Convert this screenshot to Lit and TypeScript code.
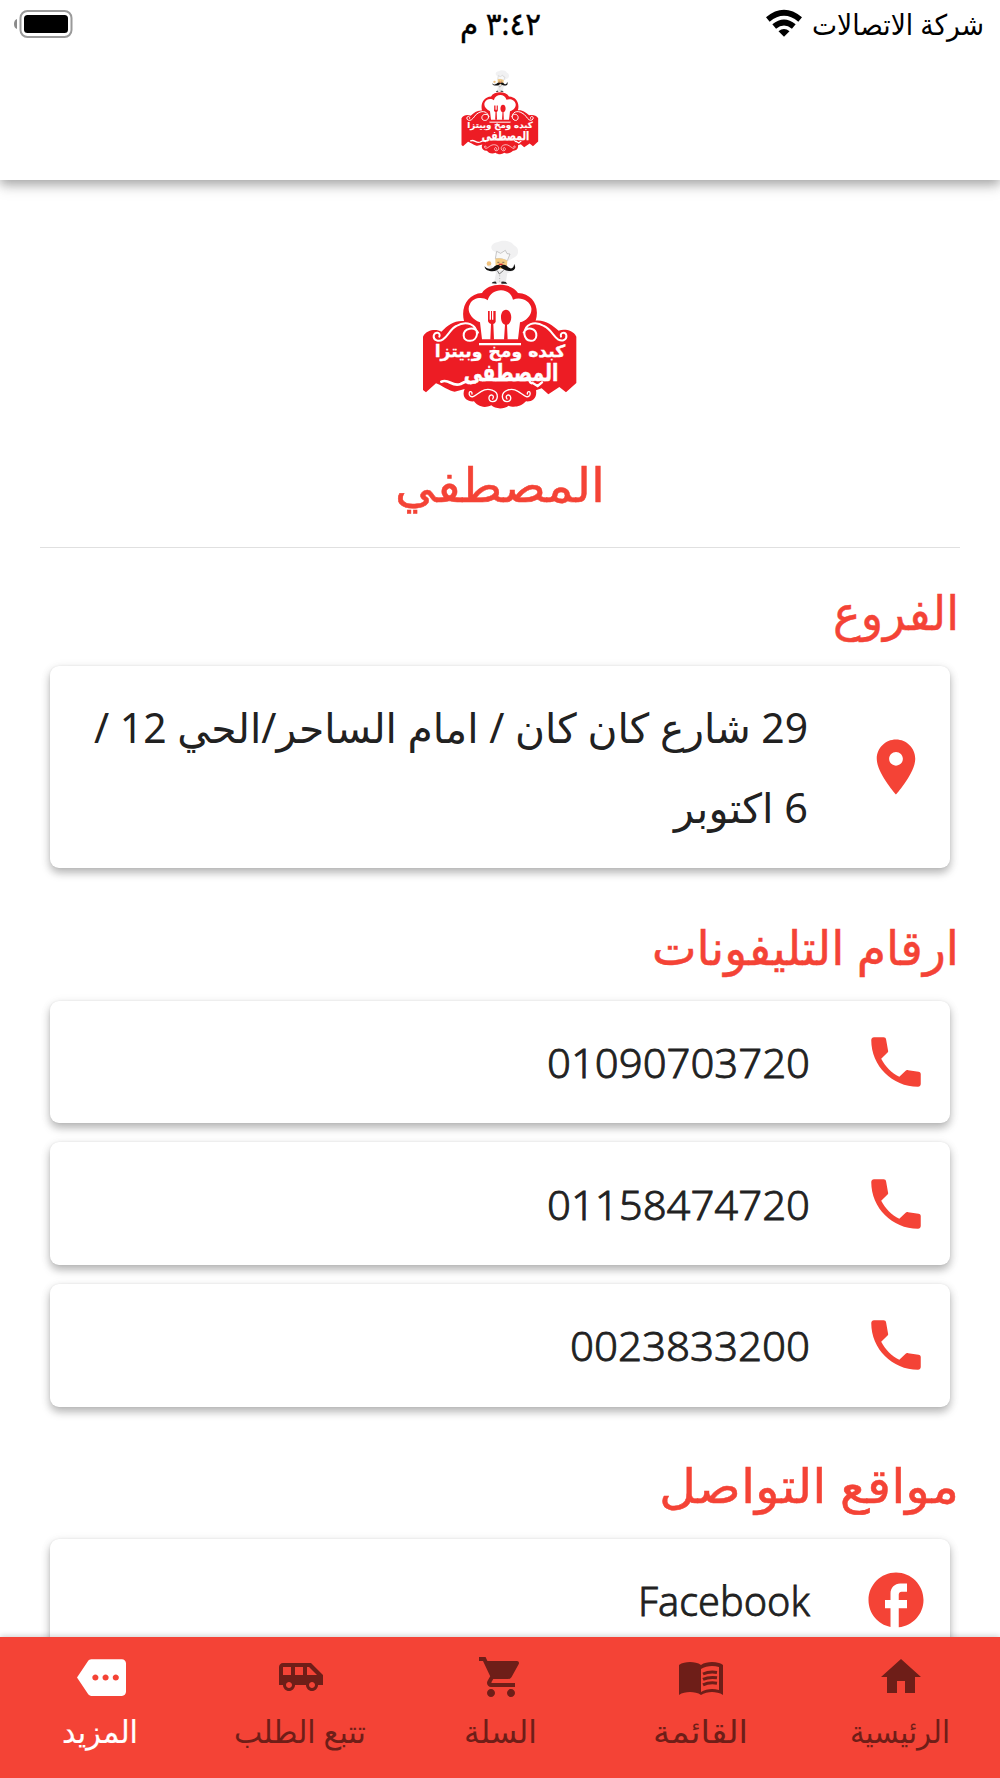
import { LitElement, html, css, svg } from "lit";
import { customElement, property } from "lit/decorators.js";

const ICONS: Record<string, string> = {
  pin: "M12 2C8.13 2 5 5.13 5 9c0 5.25 7 13 7 13s7-7.75 7-13c0-3.87-3.13-7-7-7zm0 9.5c-1.38 0-2.5-1.12-2.5-2.5s1.12-2.5 2.5-2.5 2.5 1.12 2.5 2.5-1.12 2.5-2.5 2.5z",
  call: "M20.2 15.5l-3.77-.5c-.35-.11-.74-.03-1.02.24l-2.2 2.13c-2.83-1.44-5.15-3.75-6.59-6.59l2.4-2.3c.1-.1.16-.3.12-.5L8.4 3.8c-.06-.5-.45-.8-.9-.8H4c-.55 0-1 .45-1 1 0 9.39 7.61 17 17 17 .55 0 1-.45 1-1v-3.600c0-.5-.3-.84-.8-.9z",
  facebook: "M22 12c0-5.52-4.48-10-10-10S2 6.48 2 12c0 4.84 3.44 8.87 8 9.8V15H8v-3h2V9.5C10 7.57 11.57 6 13.5 6H16v3h-2c-.55 0-1 .45-1 1v2h3v3h-3v6.95c5.05-.5 9-4.76 9-9.95z",
  home: "M10 20v-6h4v6h5v-8h3L12 3 2 12h3v8z",
  menu: "M21 5c-1.11-.35-2.33-.5-3.5-.5-1.95 0-4.05.4-5.5 1.5-1.45-1.1-3.55-1.5-5.5-1.5S2.45 4.9 1 6v15c1.45-1.1 3.55-1.5 5.5-1.5S10.55 19.9 12 21c1.35-.85 3.8-1.5 5.5-1.5 1.65 0 4.05.4 5.5 1.5V6c-.6-.45-1.25-.75-2-1zm0 13.5c-1.1-.35-2.3-.5-3.5-.5-1.7 0-4.15.65-5.5 1.5V8c1.35-.85 3.8-1.5 5.5-1.5 1.2 0 2.4.15 3.5.5z",
  cart: "M7 18c-1.1 0-1.99.9-1.99 2S5.9 22 7 22s2-.9 2-2-.9-2-2-2zM1 2v2h2l3.6 7.59-1.35 2.45c-.16.28-.25.61-.25.96 0 1.1.9 2 2 2h12v-2H7.42c-.14 0-.25-.11-.25-.25l.03-.12.9-1.63h7.45c.75 0 1.41-.41 1.75-1.03l3.58-6.49c.08-.14.12-.31.12-.48 0-.55-.45-1-1-1H5.21l-.94-2H1zm16 16c-1.1 0-1.99.9-1.99 2s.89 2 1.99 2 2-.9 2-2-.9-2-2-2z",
  van: "M17 5H3c-1.1 0-2 .89-2 2v9h2c0 1.65 1.34 3 3 3s3-1.35 3-3h5.5c0 1.65 1.34 3 3 3s3-1.35 3-3H23v-5l-6-6zM3 11V7h4v4H3zm3 6.5c-.83 0-1.5-.67-1.5-1.5s.67-1.5 1.5-1.5 1.5.67 1.5 1.5-.67 1.5-1.5 1.5zm7-6.5H9V7h4v4zm4.5 6.5c-.83 0-1.5-.67-1.5-1.5s.67-1.5 1.5-1.5 1.5.67 1.5 1.5-.67 1.5-1.5 1.5zM15 11V7h1l4 4h-5z",
  more: "M22 3H7c-.69 0-1.23.35-1.59.88L0 12l5.41 8.11c.36.53.97.89 1.66.89H22c1.1 0 2-.9 2-2V5c0-1.1-.9-2-2-2zM9 13.5c-.83 0-1.5-.67-1.5-1.5s.67-1.5 1.5-1.5 1.5.67 1.5 1.5-.67 1.5-1.5 1.5zm5 0c-.83 0-1.5-.67-1.5-1.5s.67-1.5 1.5-1.5 1.5.67 1.5 1.5-.67 1.5-1.5 1.5zm5 0c-.83 0-1.5-.67-1.5-1.5s.67-1.5 1.5-1.5 1.5.67 1.5 1.5-.67 1.5-1.5 1.5z",
};

@customElement("app-icon")
class AppIcon extends LitElement {
  @property() name = "";
  @property({ type: Number }) size = 48;
  static styles = css`:host, svg { display: block; }`;
  render() {
    return html`<svg width=${this.size} height=${this.size} viewBox="0 0 24 24" fill="currentColor">
      <path fill-rule="evenodd" d=${ICONS[this.name]}></path>
      ${this.name === "menu"
        ? svg`<path fill="none" stroke="currentColor" stroke-width="1.5" d="M13 10.500q3-1.400 7-.8M13 13.200q3-1.400 7-.8M13 15.900q3-1.400 7-.8"></path>`
        : ""}
    </svg>`;
  }
}

/* One line of text set to an exact measure; the baseline sits at \`base\` inside the box. */
@customElement("fit-text")
class FitText extends LitElement {
  @property() text = "";
  @property({ type: Number }) w = 100;
  @property({ type: Number }) h = 60;
  @property({ type: Number }) base = 40;
  @property({ type: Number }) size = 40;
  @property({ type: Number }) bold = 0;
  static styles = css`
    :host, svg { display: block; overflow: visible; }
    text { font-family: "Noto Sans", "DejaVu Sans", sans-serif; font-weight: inherit; }
  `;
  render() {
    return html`<svg width=${this.w} height=${this.h} fill="currentColor" stroke="currentColor" stroke-width=${this.bold}>
      <text x=${this.w / 2} y=${this.base} font-size=${this.size} text-anchor="middle"
        direction="rtl" textLength=${this.w} lengthAdjust="spacingAndGlyphs">${this.text}</text>
    </svg>`;
  }
}

@customElement("brand-logo")
class BrandLogo extends LitElement {
  @property({ type: Number }) size = 200;
  static styles = css`
    :host, svg { display: block; }
    text { font-family: "DejaVu Sans", sans-serif; font-weight: 700; }
  `;
  render() {
    return html`<svg width=${this.size} height=${this.size} viewBox="0 0 600 600">
      <path fill="#f1f1f2" d="M287 96C268 92 270 70 292 67C306 58 333 62 342 76C360 84 357 108 341 113L326 122L287 117Z"></path>
      <path fill="#f8f8f8" stroke="#999" stroke-width="1.5" d="M290 94L302 100L316 91L321 101L330 102L322 122Q303 113 286 116Z"></path>
      <path fill="#f3cb83" d="M286 116Q305 111 322 122L320 147H287Z"></path>
      <circle cx="267" cy="131" r="7" fill="#f0c27e"></circle>
      <path fill="#ededee" d="M262 138L288 158L282 190H317L322 160L338 154L318 149H285L274 136Z"></path>
      <path fill="#c82128" d="M296 131h12v4h-12z"></path>
      <path fill="none" stroke="#444" stroke-width="2" d="M292 127h6M307 127h6M292 152L298 162L311 151"></path>
      <path fill="none" stroke="#999" stroke-width="2" stroke-dasharray="3 5" d="M299 166v20"></path>
      <path fill="#111" d="M254 139C260 149 276 148 282 140C291 132 299 135 302 139C308 132 318 133 325 142C334 149 343 144 342 131C351 146 342 155 327 153C315 152 306 146 301 142C293 153 282 155 269 153C258 151 254 145 254 139Z"></path>
      <path fill="#222" d="M275 190Q277 184 288 185L290 191ZM304 185Q318 183 322 191H304Z"></path>
      <path fill="#ed1c24" d="M192 303C181 260 205 221 246 219C265 187 333 185 354 219C398 221 420 260 407 302C440 300 456 317 476 332C490 327 518 328 529 350V489L498 517L478 501L445 523L425 505L408 511C412 533 397 546 378 544C362 562 337 563 326 557C309 570 284 566 274 556C249 568 230 555 222 544C198 546 184 528 194 507L164 515C150 515 121 494 108 490L78 517L69 510V350C82 326 112 328 124 335C145 314 162 301 192 303Z"></path>
      <path fill="#fff" d="M246 358L240 307C211 296 199 269 210 252C219 232 249 230 263 241C273 203 329 199 339 239C363 229 390 243 394 264C397 284 378 303 360 307L354 358Z"></path>
      <path fill="#fff" d="M237 369h126v7H237z"></path>
      <path fill="#ed1c24" d="M237 360h126v8H237z"></path>
      <path fill="#ed1c24" d="M264 273h5v26h4v-26h3v26h4v-26h7v32q-2 6-7 7l2 47h-11l2-47q-7-2-9-8zM318 269C338 269 339 311 321 314L323 359H312L315 314C298 309 299 269 318 269Z"></path>
      <g fill="none" stroke="#fff" stroke-width="6" stroke-linecap="round">
        <path d="M234 338C225 318 190 323 191 347C192 369 229 368 231 342C230 313 199 300 169 318C151 326 146 347 128 359C116 367 100 360 101 348C103 333 124 337 118 350"></path>
        <path d="M371 338C380 318 410 323 409 347C408 369 377 368 373 342C373 313 403 300 432 318C453 327 459 348 475 359C488 366 501 358 499 346C496 334 479 337 483 350"></path>
        <g stroke-width="4">
          <path d="M216 522C217 510 203 514 209 526C216 538 230 522 244 514C265 501 293 512 292 530C290 551 264 548 267 532C269 520 286 525 278 537"></path>
          <path d="M382 522C381 510 395 514 389 526C382 538 368 522 354 514C333 501 307 512 307 530C309 551 335 548 332 532C330 520 313 525 321 537"></path>
        </g>
        <path stroke-width="8" d="M124 485C148 474 155 503 182 492C196 484 202 482 212 489"></path>
        <path stroke-width="7" d="M240 480H388Q390 492 398 489L413 498L426 487"></path>
      </g>
      <text x="300" y="410" font-size="50" fill="#fff" stroke="#fff" stroke-width="1" text-anchor="middle" direction="rtl" textLength="392" lengthAdjust="spacingAndGlyphs">كبده ومخ وبيتزا</text>
      <text x="333" y="482" font-size="72" fill="#fff" stroke="#fff" stroke-width="1.5" text-anchor="middle" direction="rtl" textLength="284" lengthAdjust="spacingAndGlyphs">المصطفى</text>
    </svg>`;
  }
}

@customElement("app-root")
class AppRoot extends LitElement {
  static styles = css`
    :host { display: flex; flex-direction: column; height: 1778px; background: #fff; direction: rtl; overflow: hidden; color: #212121; }
    .header { height: 180px; flex: none; background: #fff; box-shadow: 0 4px 10px rgba(0,0,0,.28), 0 8px 14px rgba(0,0,0,.1); z-index: 1; }
    .status { height: 60px; display: grid; grid-template-columns: 1fr auto 1fr; color: #000; }
    .carrier { display: flex; gap: 10px; padding-right: 16px; }
    .wifi { margin-top: 9px; }
    .battery { justify-self: end; margin: 10px 0 0 14px; }
    .header-logo { display: flex; justify-content: center; }
    .content { flex: 1; min-height: 0; overflow: hidden; padding: 40px 40px 0; }
    .brand { display: flex; flex-direction: column; align-items: center; color: #f44336; height: 327px; border-bottom: 1px solid #e0e0e0; }
    .brand fit-text { margin-top: 30px; }
    .heading { color: #f44336; padding: 30px 1px 0 0; height: 88px; }
    .cards { display: flex; flex-direction: column; gap: 19.3px; padding: 0 10px; }
    .card { display: flex; align-items: center; height: 122.5px; border-radius: 9px; background: #fff; box-shadow: 0 0 2px rgba(0,0,0,.08), 0 5px 8px rgba(0,0,0,.25), 0 2px 12px rgba(0,0,0,.07); padding-right: 21px; }
    .card.tall { height: 202px; }
    .card app-icon { color: #f44336; }
    .lines { padding-right: 55px; }
    .nums { padding-right: 53px; font-weight: 300; }
    .sec { margin-bottom: 14.5px; }
    .nav { height: 141px; flex: none; background: #f44336; display: grid; grid-template-columns: repeat(5, 1fr); color: #6e1e18; z-index: 1; box-shadow: 0 -1px 6px rgba(0,0,0,.2); }
    .tab { display: flex; flex-direction: column; align-items: center; padding: 16px 0 0 2px; }
    .tab fit-text { margin-right: 2px; }
    .tab.on { color: #fff; }
  `;

  private number(n: string, w: number) {
    return html`<div class="card"><app-icon name="call" .size=${66}></app-icon>
      <fit-text class="nums" .text=${n} .w=${w} .h=${62} .base=${47} .size=${40.5} .bold=${0.8}></fit-text></div>`;
  }
  private heading(t: string, w: number) {
    return html`<div class="heading"><fit-text .text=${t} .w=${w} .h=${56} .base=${52} .size=${48} .bold=${0.5}></fit-text></div>`;
  }
  private tab(name: string, label: string, w: number, on = false) {
    return html`<div class="tab ${on ? "on" : ""}"><app-icon .name=${name} .size=${on ? 49 : 48}></app-icon>
      <fit-text .text=${label} .w=${w} .h=${60} .base=${on ? 40.5 : 41.5} .size=${31.5} .bold=${on ? 0.2 : 0}></fit-text></div>`;
  }

  render() {
    return html`
      <div class="header">
        <div class="status">
          <div class="carrier">
            <fit-text .text=${"شركة الاتصالات"} .w=${172} .h=${50} .base=${34.5} .size=${28.5}></fit-text>
            <svg class="wifi" width="36" height="28" viewBox="0 0 36 28">
              <g fill="none" stroke="#000" stroke-width="5.8">
                <path d="M1.800 10.500Q18-3 34.200 10.500"></path><path d="M8.200 17.500Q18 9.300 27.800 17.500"></path>
              </g>
              <path d="M12.500 22.200Q18 18 23.500 22.200L18 27.800Z"></path>
            </svg>
          </div>
          <fit-text .text=${"٣:٤٢ م"} .w=${81} .h=${50} .base=${34.5} .size=${31.5} .bold=${0.4}></fit-text>
          <svg class="battery" width="59" height="28" viewBox="0 0 59 28">
            <path fill="#8a8a8a" d="M3 9Q0 10 0 14T3 19Z"></path>
            <rect x="6.5" y="1" width="51" height="26" rx="7" fill="none" stroke="#9a9a9a" stroke-width="2"></rect>
            <rect x="10" y="5" width="44" height="18" rx="3.5"></rect>
          </svg>
        </div>
        <div class="header-logo"><brand-logo .size=${100}></brand-logo></div>
      </div>
      <div class="content">
        <div class="brand"><brand-logo .size=${200}></brand-logo>
          <fit-text .text=${"المصطفي"} .w=${210} .h=${80} .base=${51.5} .size=${48} .bold=${0.5}></fit-text></div>
        <div class="sec">
          ${this.heading("الفروع", 126)}
          <div class="cards"><div class="card tall"><app-icon name="pin" .size=${66}></app-icon>
            <div class="lines">
              <fit-text .text=${"29 شارع كان كان / امام الساحر/الحي 12 /"} .w=${714} .h=${80} .base=${56} .size=${41}></fit-text>
              <fit-text .text=${"6 اكتوبر"} .w=${134} .h=${80} .base=${56} .size=${41}></fit-text>
            </div></div></div>
        </div>
        <div class="sec">
          ${this.heading("ارقام التليفونات", 307)}
          <div class="cards">
            ${this.number("01090703720", 263)}${this.number("01158474720", 263)}${this.number("0023833200", 240)}
          </div>
        </div>
        <div class="sec">
          ${this.heading("مواقع التواصل", 300)}
          <div class="cards">
            <div class="card"><app-icon name="facebook" .size=${66}></app-icon>
              <fit-text class="nums" .text=${"Facebook"} .w=${172} .h=${62} .base=${47} .size=${40.5} .bold=${0.8}></fit-text></div>
          </div>
        </div>
      </div>
      <div class="nav">
        ${this.tab("home", "الرئيسية", 100)}${this.tab("menu", "القائمة", 95)}${this.tab("cart", "السلة", 73)}${this.tab("van", "تتبع الطلب", 132)}${this.tab("more", "المزيد", 76, true)}
      </div>`;
  }
}
